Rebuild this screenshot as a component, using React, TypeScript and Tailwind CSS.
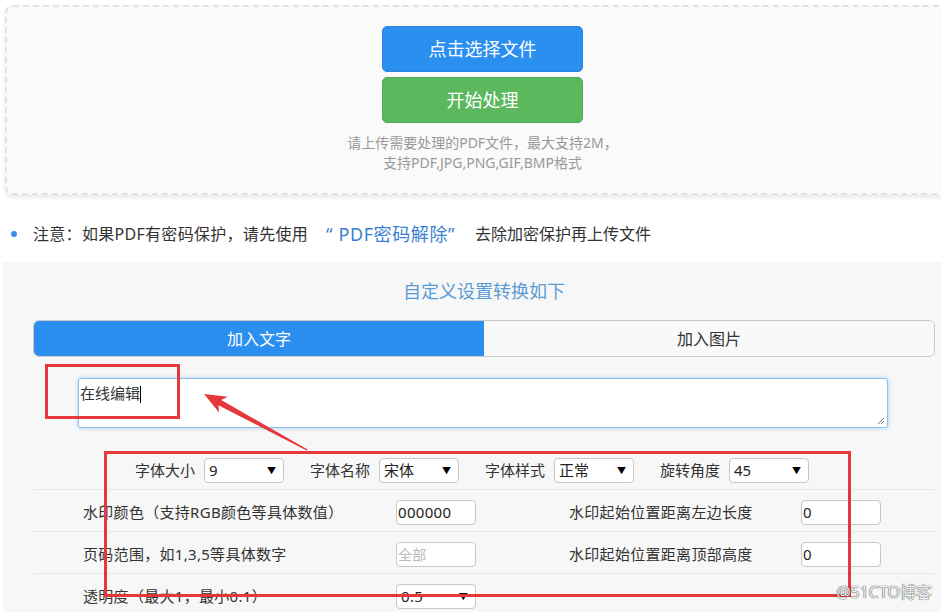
import React from "react";

const font = "font-['Microsoft_YaHei','Noto_Sans','Noto_Sans_CJK_SC',sans-serif]";

function FakeSelect({ value }: { value: string }) {
  return (
    <div className="w-[80px] h-[25px] bg-white border border-[#c8c8c8] rounded-[4px] flex items-center justify-between pl-[4px] pr-[7px] text-[15px] text-[#222]">
      <span>{value}</span>
      <span className="text-[9px] text-black">▼</span>
    </div>
  );
}

function FakeInput({ value, placeholder }: { value?: string; placeholder?: string }) {
  return (
    <div className="w-[80px] h-[25px] bg-white border border-[#c8c8c8] rounded-[4px] flex items-center pl-[1px] text-[15px]">
      {value ? <span className="text-[#222]">{value}</span> : <span className="text-[#bbb] text-[14px]">{placeholder}</span>}
    </div>
  );
}

function Field({ label, children }: { label: string; children: React.ReactNode }) {
  return (
    <div className="flex items-center gap-[9px]">
      <span className="w-[60px] text-[15px] text-[#333] whitespace-nowrap">{label}</span>
      {children}
    </div>
  );
}

export default function App() {
  return (
    <div className={`relative w-[941px] h-[612px] overflow-hidden bg-white ${font}`}>
      {/* upload box */}
      <div className="mt-[5px] ml-[5px] w-[955px] h-[190px] border-2 border-dashed border-[#e2e2e2] rounded-[8px] bg-[#fafafa] shadow-[0_3px_4px_rgba(0,0,0,0.08)] flex flex-col items-center pt-[19px]">
        <button className="w-[201px] h-[46px] rounded-[5px] bg-[#2b8ff0] border border-[#2a86e0] text-white text-[18px]">
          点击选择文件
        </button>
        <button className="mt-[5px] w-[201px] h-[46px] rounded-[5px] bg-[#5cb85c] border border-[#4fa94f] text-white text-[18px]">
          开始处理
        </button>
        <div className="mt-[10px] text-[14px] leading-[20px] text-[#999] text-center">
          <div>请上传需要处理的PDF文件，最大支持2M，</div>
          <div>支持PDF,JPG,PNG,GIF,BMP格式</div>
        </div>
      </div>

      {/* notice */}
      <div className="mt-[27px] h-[24px] flex items-center pl-[11px] text-[16px] text-[#333] whitespace-nowrap">
        <span className="w-[6px] h-[6px] rounded-full bg-[#3a8ee6]" />
        <span className="ml-[16px] tracking-[0.3px]">注意：如果PDF有密码保护，请先使用</span>
        <span className="ml-[18px] text-[18px] tracking-[0.6px] text-[#3b7fd0]">“ PDF密码解除”</span>
        <span className="ml-[20px]">去除加密保护再上传文件</span>
      </div>

      {/* settings panel */}
      <div className="mt-[16px] ml-[3px] w-[962px] h-[360px] bg-[#f7f7f7] px-[30px] pt-[17px]">
        <div className="h-[24px] leading-[24px] text-center text-[18px] text-[#5b9bd5]">自定义设置转换如下</div>

        <div className="mt-[17px] h-[37px] flex rounded-[6px] overflow-hidden border border-[#c8c8c8] text-[16px]">
          <div className="w-[450px] bg-[#2b8ff0] text-white flex items-center justify-center">加入文字</div>
          <div className="flex-1 bg-[#f9f9f9] text-[#333] flex items-center justify-center">加入图片</div>
        </div>

        <div className="mt-[21px] ml-[45px] w-[810px] h-[50px] bg-white border border-[#8fc1ea] rounded-[3px] shadow-[0_0_4px_rgba(102,175,233,0.6)] relative px-[1px] pt-[3px] text-[15px] text-[#333]">
          在线编辑<span className="inline-block w-[1px] h-[17px] bg-black align-middle" />
          <svg className="absolute right-[2px] bottom-[2px]" width="8" height="8" viewBox="0 0 8 8">
            <path d="M7 1L1 7M7 4L4 7" stroke="#777" strokeWidth="1" />
          </svg>
        </div>

        <div className="pt-[30px] pb-[6px] border-b border-[#e6e6e6] flex items-center gap-[26px] pl-[102px]">
          <Field label="字体大小"><FakeSelect value="9" /></Field>
          <Field label="字体名称"><FakeSelect value="宋体" /></Field>
          <Field label="字体样式"><FakeSelect value="正常" /></Field>
          <Field label="旋转角度"><FakeSelect value="45" /></Field>
        </div>

        <div className="h-[42px] pt-[3px] border-b border-[#e6e6e6] grid grid-cols-[313px_80px_93px_232px_80px] items-center pl-[50px] text-[15px] tracking-[0.3px] text-[#333] whitespace-nowrap">
          <span>水印颜色（支持RGB颜色等具体数值）</span>
          <FakeInput value="000000" />
          <span />
          <span>水印起始位置距离左边长度</span>
          <FakeInput value="0" />
        </div>

        <div className="h-[42px] pt-[3px] border-b border-[#e6e6e6] grid grid-cols-[313px_80px_93px_232px_80px] items-center pl-[50px] text-[15px] tracking-[0.3px] text-[#333] whitespace-nowrap">
          <span>页码范围，如1,3,5等具体数字</span>
          <FakeInput placeholder="全部" />
          <span />
          <span>水印起始位置距离顶部高度</span>
          <FakeInput value="0" />
        </div>

        <div className="h-[42px] pt-[3px] grid grid-cols-[313px_80px] items-center pl-[50px] text-[15px] tracking-[0.3px] text-[#333] whitespace-nowrap">
          <span>透明度（最大1，最小0.1）</span>
          <FakeSelect value="0.5" />
        </div>
      </div>

      {/* red annotations */}
      <div className="absolute left-[45px] top-[364px] w-[135px] h-[55px] border-[3px] border-[#e5383b]" />
      <div className="absolute left-[104px] top-[451px] w-[747px] h-[146px] border-[3px] border-[#e5383b]" />
      <svg className="absolute left-0 top-0 pointer-events-none" width="941" height="612">
        <polygon
          points="204,394 227.7,396.7 221.2,400 307.6,449.6 306.6,450.4 218.4,405.2 219.1,412.5"
          fill="#e5383b"
        />
      </svg>

      <div className="absolute right-[9px] top-[580px] text-[16px] leading-[24px] text-[#f2f2f2] [text-shadow:0_0_1px_#444,0_0_1px_#444]">
        @51CTO博客
      </div>
    </div>
  );
}
